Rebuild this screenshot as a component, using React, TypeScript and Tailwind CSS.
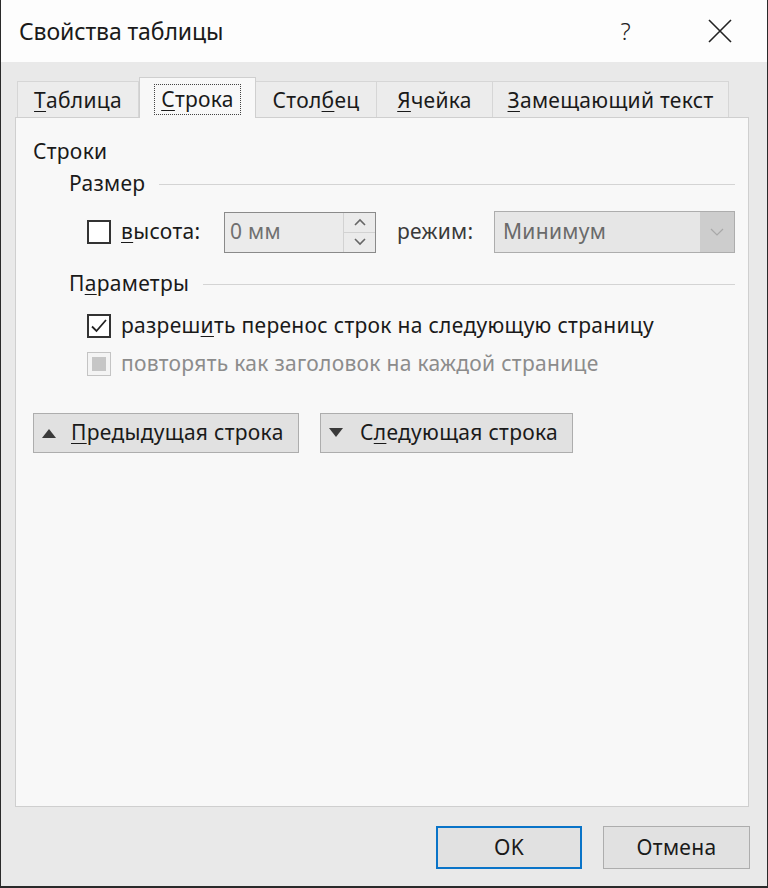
import React from 'react';

const FONT = { fontFamily: '"Noto Sans", "Open Sans", sans-serif' };

function U({ children }: { children: React.ReactNode }) {
  return <span className="underline underline-offset-[3px] decoration-1">{children}</span>;
}

function Tab({ label, width, selected = false }: { label: React.ReactNode; width: number; selected?: boolean }) {
  if (selected) {
    return (
      <div
        className="relative z-10 -mb-px flex h-[41px] items-start justify-center border border-b-0 border-[#cfcfcf] bg-[#f8f8f8] pt-[6px]"
        style={{ width }}
      >
        <div className="border border-dotted border-[#444] px-[6px] leading-[29px]">{label}</div>
      </div>
    );
  }
  return (
    <div
      className="-ml-px flex h-[36px] items-center justify-center border border-b-0 border-[#d6d6d6] bg-[#ececec] pt-[2px] first:ml-0"
      style={{ width }}
    >
      {label}
    </div>
  );
}

function GroupTitle({ children }: { children: React.ReactNode }) {
  return (
    <div className="ml-[36px] flex h-[28px] items-center gap-[14px]">
      <span>{children}</span>
      <div className="h-px flex-1 bg-[#d4d4d4]" />
    </div>
  );
}

function Checkbox({ state }: { state: 'off' | 'on' | 'disabled' }) {
  if (state === 'disabled') {
    return (
      <div className="flex h-[24px] w-[24px] shrink-0 items-center justify-center border border-[#c4c4c4] bg-[#f4f4f4]">
        <div className="h-[14px] w-[14px] bg-[#c6c6c6]" />
      </div>
    );
  }
  return (
    <div className="flex h-[24px] w-[24px] shrink-0 items-center justify-center border-2 border-[#333] bg-white">
      {state === 'on' && (
        <svg width="18" height="18" viewBox="0 0 18 18" fill="none">
          <path d="M2 9.5 L6.5 14 L16 3" stroke="#222" strokeWidth="1.8" />
        </svg>
      )}
    </div>
  );
}

function Triangle({ up }: { up: boolean }) {
  return (
    <svg width="16" height="12" viewBox="0 0 16 12">
      <path d={up ? 'M1 11 L8 2 L15 11 Z' : 'M1 1 L15 1 L8 10 Z'} fill="#3a3a3a" />
    </svg>
  );
}

export default function App() {
  return (
    <div
      className="flex h-[888px] w-[768px] flex-col border-x border-b-2 border-x-[#2a2a2a] border-b-[#2a2a2a] bg-[#e9e9e9] text-[21px] tracking-[0.3px] text-[#1a1a1a]"
      style={FONT}
    >
      {/* title bar */}
      <div className="flex h-[62px] shrink-0 items-center bg-[#fdfdfd] pl-[18px]">
        <span className="text-[23px] tracking-[-0.1px]">Свойства таблицы</span>
        <span className="ml-auto mr-[76px] text-[24px] font-light text-[#222]">?</span>
        <svg className="mr-[34px]" width="26" height="26" viewBox="0 0 26 26">
          <path d="M2 2 L24 24 M24 2 L2 24" stroke="#222" strokeWidth="1.6" />
        </svg>
      </div>

      {/* body */}
      <div className="flex flex-1 flex-col pl-[14px] pr-[18px]">
        <div className="flex h-[55px] items-end pl-[2px] pt-[14px]">
          <Tab width={122} label={<><U>Т</U>аблица</>} />
          <Tab width={117} selected label={<><U>С</U>трока</>} />
          <Tab width={122} label={<>Стол<U>б</U>ец</>} />
          <Tab width={117} label={<><U>Я</U>чейка</>} />
          <Tab width={237} label={<><U>З</U>амещающий текст</>} />
        </div>

        <div className="flex h-[690px] flex-col border border-[#cfcfcf] bg-[#f8f8f8] pl-[17px] pr-[13px] pt-[20px]">
          <div className="flex h-[28px] items-center">Строки</div>

          <div className="mt-[4px]">
            <GroupTitle>Размер</GroupTitle>
          </div>

          <div className="ml-[54px] mt-[13px] flex h-[42px] items-center">
            <Checkbox state="off" />
            <span className="ml-[10px] w-[103px]">
              <U>в</U>ысота:
            </span>
            <div className="flex h-[41px] w-[152px] border border-[#8a8a8a] bg-[#ebebeb]">
              <div className="flex flex-1 items-center pl-[5px] text-[#707070]">0 мм</div>
              <div className="flex w-[32px] flex-col border-l border-[#d2d2d2]">
                <div className="flex flex-1 items-center justify-center border-b border-[#d2d2d2]">
                  <svg width="12" height="8" viewBox="0 0 12 8">
                    <path d="M1 7 L6 2 L11 7" stroke="#666" strokeWidth="1.6" fill="none" />
                  </svg>
                </div>
                <div className="flex flex-1 items-center justify-center">
                  <svg width="12" height="8" viewBox="0 0 12 8">
                    <path d="M1 1 L6 6 L11 1" stroke="#666" strokeWidth="1.6" fill="none" />
                  </svg>
                </div>
              </div>
            </div>
            <span className="ml-[21px] w-[97px] text-[#3a3a3a]">режим:</span>
            <div className="flex h-[42px] flex-1 border border-[#adadad] bg-[#e6e6e6]">
              <div className="flex flex-1 items-center pl-[8px] text-[#6a6a6a]">Минимум</div>
              <div className="flex w-[34px] items-center justify-center bg-[#cdcdcd]">
                <svg width="14" height="8" viewBox="0 0 14 8">
                  <path d="M1 1 L7 7 L13 1" stroke="#a8a8a8" strokeWidth="1.2" fill="none" />
                </svg>
              </div>
            </div>
          </div>

          <div className="mt-[17px]">
            <GroupTitle>
              П<U>а</U>раметры
            </GroupTitle>
          </div>

          <div className="ml-[54px] mt-[14px] flex h-[28px] items-center gap-[10px]">
            <Checkbox state="on" />
            <span>
              разреш<U>и</U>ть перенос строк на следующую страницу
            </span>
          </div>
          <div className="ml-[54px] mt-[10px] flex h-[28px] items-center gap-[10px]">
            <Checkbox state="disabled" />
            <span className="text-[#8c8c8c]">повторять как заголовок на каждой странице</span>
          </div>

          <div className="mt-[35px] flex gap-[21px]">
            <button className="flex h-[40px] w-[266px] items-center gap-[14px] border border-[#adadad] bg-[#e1e1e1] pl-[7px]">
              <Triangle up />
              <span>
                <U>П</U>редыдущая строка
              </span>
            </button>
            <button className="flex h-[40px] w-[253px] items-center gap-[16px] border border-[#adadad] bg-[#e1e1e1] pl-[7px]">
              <Triangle up={false} />
              <span>
                С<U>л</U>едующая строка
              </span>
            </button>
          </div>
        </div>

        <div className="mt-[19px] flex justify-end gap-[21px]">
          <button className="flex h-[43px] w-[146px] items-center justify-center border-2 border-[#0a74c8] bg-[#e1e1e1]">
            OK
          </button>
          <button className="-mr-px flex h-[43px] w-[147px] items-center justify-center border border-[#adadad] bg-[#e1e1e1]">
            Отмена
          </button>
        </div>
      </div>
    </div>
  );
}
